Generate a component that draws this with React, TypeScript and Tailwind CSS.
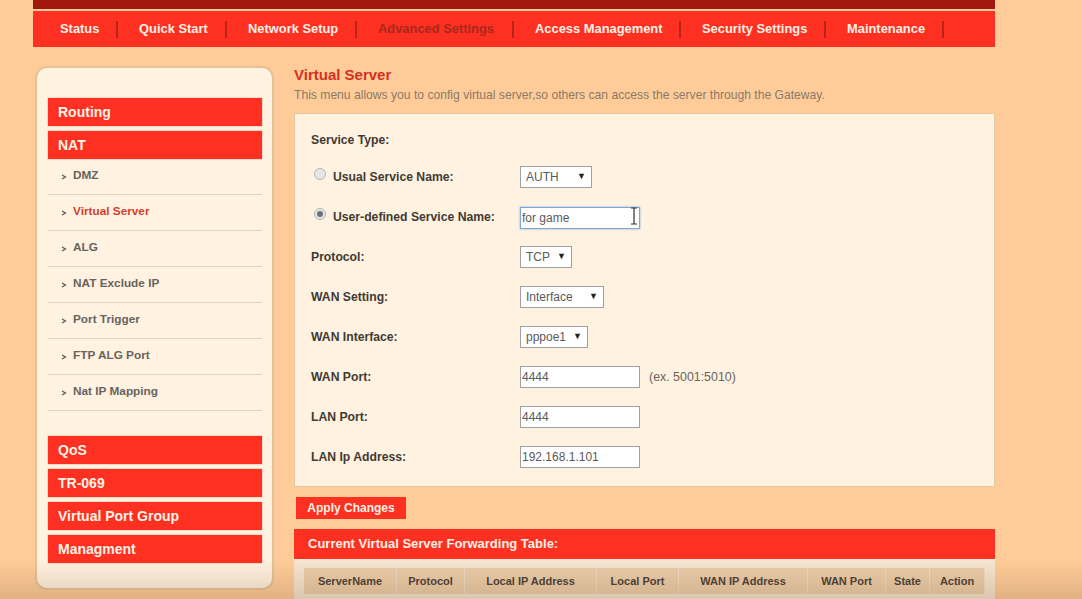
const navItems = [
  { title: "Status", w: "w-[85px]", pl: "pl-[27px]" },
  { title: "Quick Start", w: "w-[109px]", pl: "pl-[21px]" },
  { title: "Network Setup", w: "w-[130px]", pl: "pl-[21px]" },
  { title: "Advanced Settings", w: "w-[157px]", pl: "pl-[21px]", active: true },
  { title: "Access Management", w: "w-[167px]", pl: "pl-[21px]" },
  { title: "Security Settings", w: "w-[145px]", pl: "pl-[21px]" },
  { title: "Maintenance", w: "w-[118px]", pl: "pl-[21px]" },
];

const natItems = ["DMZ", "Virtual Server", "ALG", "NAT Exclude IP", "Port Trigger", "FTP ALG Port", "Nat IP Mapping"];
const bottomItems = ["QoS", "TR-069", "Virtual Port Group", "Managment"];

const columns = [
  { title: "ServerName", w: "w-[93px]" },
  { title: "Protocol", w: "w-[68px]" },
  { title: "Local IP Address", w: "w-[132px]" },
  { title: "Local Port", w: "w-[82px]" },
  { title: "WAN IP Address", w: "w-[129px]" },
  { title: "WAN Port", w: "w-[78px]" },
  { title: "State", w: "w-[44px]" },
  { title: "Action", w: "w-[55px]" },
];

function MenuHead({ title, className = "" }: { title: string; className?: string }) {
  return (
    <div className={`flex h-[28px] items-center bg-[#fd3021] pl-[10px] text-[14px] font-bold text-[#fff3e6] shadow-[0_0_1px_#d8604a] ${className}`}>
      {title}
    </div>
  );
}

function Chevron() {
  return (
    <svg width="6" height="6" viewBox="0 0 6 6" className="mr-[6px] mt-[2px] shrink-0">
      <path d="M1 1 L4.5 3 L1 5" fill="none" stroke="#555" strokeWidth="1.2" />
    </svg>
  );
}

function Row({ label, children, radio, h = "h-[40px]" }: { label: string; children?: React.ReactNode; radio?: "on" | "off"; h?: string }) {
  return (
    <div className={`flex items-center ${h}`}>
      <div className={`flex w-[225px] shrink-0 items-center pl-[16px] text-[12.2px] font-bold text-[#3f3a34]`}>
        {radio && (
          <span className="ml-[3px] mr-[7px] mt-[-6px] flex h-[12px] w-[12px] items-center justify-center rounded-full border border-[#b5b5b5] bg-[#e6e6e6]">
            {radio === "on" && <span className="h-[6px] w-[6px] rounded-full bg-[#6f6f78]" />}
          </span>
        )}
        {label}
      </div>
      {children}
    </div>
  );
}

function Select({ value, w }: { value: string; w: string }) {
  return (
    <div className={`flex h-[22px] items-center justify-between border border-[#a0a0a0] bg-white pl-[5px] pr-[5px] text-[12px] text-[#5a5a5a] ${w}`}>
      <span>{value}</span>
      <span className="text-[9px] text-[#222]">▼</span>
    </div>
  );
}

function TextBox({ value }: { value: string }) {
  return (
    <input
      readOnly
      value={value}
      className="h-[22px] w-[120px] border border-[#a0a0a0] bg-white pl-[1px] text-[12px] text-[#5a5a5a] outline-none"
    />
  );
}

export default function App() {
  return (
    <div
      className="relative h-[599px] w-[1082px] overflow-hidden bg-[#ffcc99] text-[#444]"
      style={{ fontFamily: '"Liberation Sans", Arial, sans-serif' }}
    >
      <div className="ml-[33px] w-[962px]">
        <div className="h-[9px] bg-[#a2180e]" />
        <div className="mt-[2px] flex h-[36px] items-center bg-[#fd3021]">
          {navItems.map((item) => (
            <div key={item.title} className={`flex h-[17px] items-center border-r-2 border-[#b8241a] text-[12.9px] font-bold ${item.w} ${item.pl} ${item.active ? "text-[#a8281c]" : "text-[#fff0e4]"}`}>
              {item.title}
            </div>
          ))}
        </div>
      </div>

      <div className="ml-[35px] mt-[19px] flex items-start">
        <aside className="h-[524px] w-[239px] shrink-0 rounded-[12px] border-2 border-[#e4c197] bg-[#fff2e0] pl-[11px] pr-[10px] pt-[30px]">
          <MenuHead title="Routing" />
          <MenuHead title="NAT" className="mt-[5px]" />
          <ul>
            {natItems.map((item) => (
              <li key={item} className="flex h-[36px] items-center border-b border-[#ddd3c3] pb-[2px] pl-[13px] text-[11.8px] font-bold">
                <Chevron />
                <span className={item === "Virtual Server" ? "text-[#d5402f]" : "text-[#68635c]"}>{item}</span>
              </li>
            ))}
          </ul>
          <div className="mt-[25px] flex flex-col gap-[5px]">
            {bottomItems.map((item) => (
              <MenuHead key={item} title={item} />
            ))}
          </div>
        </aside>

        <main className="ml-[20px] w-[701px] shrink-0">
          <h1 className="text-[15px] font-bold leading-[18px] text-[#d5301c]">Virtual Server</h1>
          <p className="mt-[4px] text-[12.13px] leading-[14px] text-[#8b7a66]">
            This menu allows you to config virtual server,so others can access the server through the Gateway.
          </p>

          <div className="mt-[11px] h-[374px] border border-[#e6c8a0] bg-[#fff2e0] pt-[10px]">
            <Row label="Service Type:" h="h-[33px]" />
            <Row label="Usual Service Name:" radio="off">
              <Select value="AUTH" w="w-[72px]" />
            </Row>
            <Row label="User-defined Service Name:" radio="on">
              <div className="relative">
                <input
                  readOnly
                  value="for game"
                  className="h-[22px] w-[120px] border border-[#7fa6d8] bg-white pl-[1px] text-[12px] text-[#5a5a5a] shadow-[0_0_2px_#7fa6d8] outline-none"
                />
                <svg width="8" height="18" viewBox="0 0 8 18" className="absolute right-[2px] top-[2px]">
                  <path d="M1 1 H7 M4 1 V17 M1 17 H7" fill="none" stroke="#333" strokeWidth="1.2" />
                </svg>
              </div>
            </Row>
            <Row label="Protocol:">
              <Select value="TCP" w="w-[52px]" />
            </Row>
            <Row label="WAN Setting:">
              <Select value="Interface" w="w-[84px]" />
            </Row>
            <Row label="WAN Interface:">
              <Select value="pppoe1" w="w-[68px]" />
            </Row>
            <Row label="WAN Port:">
              <TextBox value="4444" />
              <span className="ml-[9px] text-[12.4px] text-[#6a635a]">(ex. 5001:5010)</span>
            </Row>
            <Row label="LAN Port:">
              <TextBox value="4444" />
            </Row>
            <Row label="LAN Ip Address:">
              <TextBox value="192.168.1.101" />
            </Row>
          </div>

          <button className="ml-[2px] mt-[10px] block h-[22px] w-[110px] bg-[#fd3021] text-[12px] font-bold text-[#fff0e4]">
            Apply Changes
          </button>

          <div className="mt-[10px] flex h-[30px] items-center bg-[#fd3021] pl-[14px] text-[13px] font-bold text-[#fff0e4]">
            Current Virtual Server Forwarding Table:
          </div>
          <div className="bg-[#f7e6d2] px-[10px] pb-[10px] pt-[9px]">
            <div className="flex">
              {columns.map((col) => (
                <div key={col.title} className={`flex h-[26px] items-center justify-center border-r border-[#efdcc6] bg-[#eccdab] text-[11px] font-bold text-[#4a4038] ${col.w}`}>
                  {col.title}
                </div>
              ))}
            </div>
          </div>
        </main>
      </div>

      {/* video vignette along the bottom edge */}
      <div className="pointer-events-none absolute bottom-0 left-0 h-[40px] w-full bg-gradient-to-t from-[#6b4a20]/20 to-transparent" />
    </div>
  );
}
